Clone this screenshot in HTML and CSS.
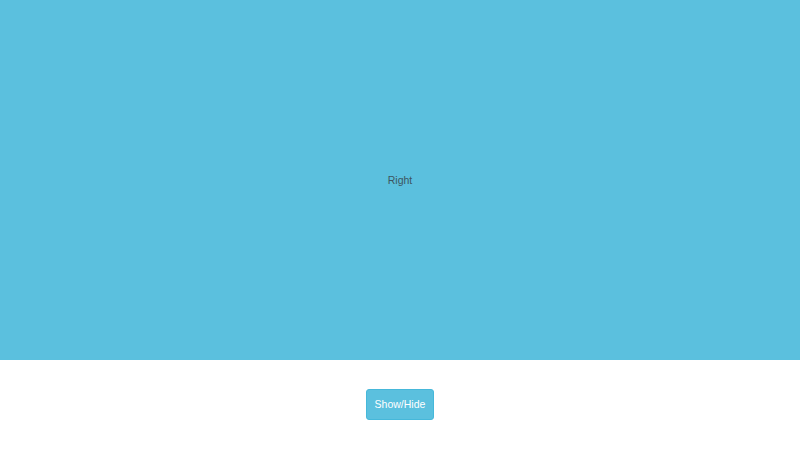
FILE: index.html
```html
<!DOCTYPE html>
<html>
<head>
<meta charset="utf-8">
<link rel="stylesheet" href="styles.css">
</head>
<body>
<div class="panel"><span class="label">Right</span></div>
<div class="footer"><button class="btn">Show/Hide</button></div>
</body>
</html>
```
FILE: styles.css
```css
html, body { margin: 0; padding: 0; background: #fff; }
body { font-family: "Liberation Sans", Arial, sans-serif; width: 800px; height: 450px; overflow: hidden; }
.panel { height: 360px; background: #5bc0de; display: flex; align-items: center; justify-content: center; }
.label { font-size: 10.5px; color: #3d5560; }
.footer { display: flex; justify-content: center; padding-top: 29px; }
.btn { box-sizing: border-box; width: 68px; height: 31px; padding: 0; background: #5bc0de; border: 1px solid #46b8da; border-radius: 3px; color: #fff; font-family: "Liberation Sans", Arial, sans-serif; font-size: 10.5px; line-height: 1; }
```
